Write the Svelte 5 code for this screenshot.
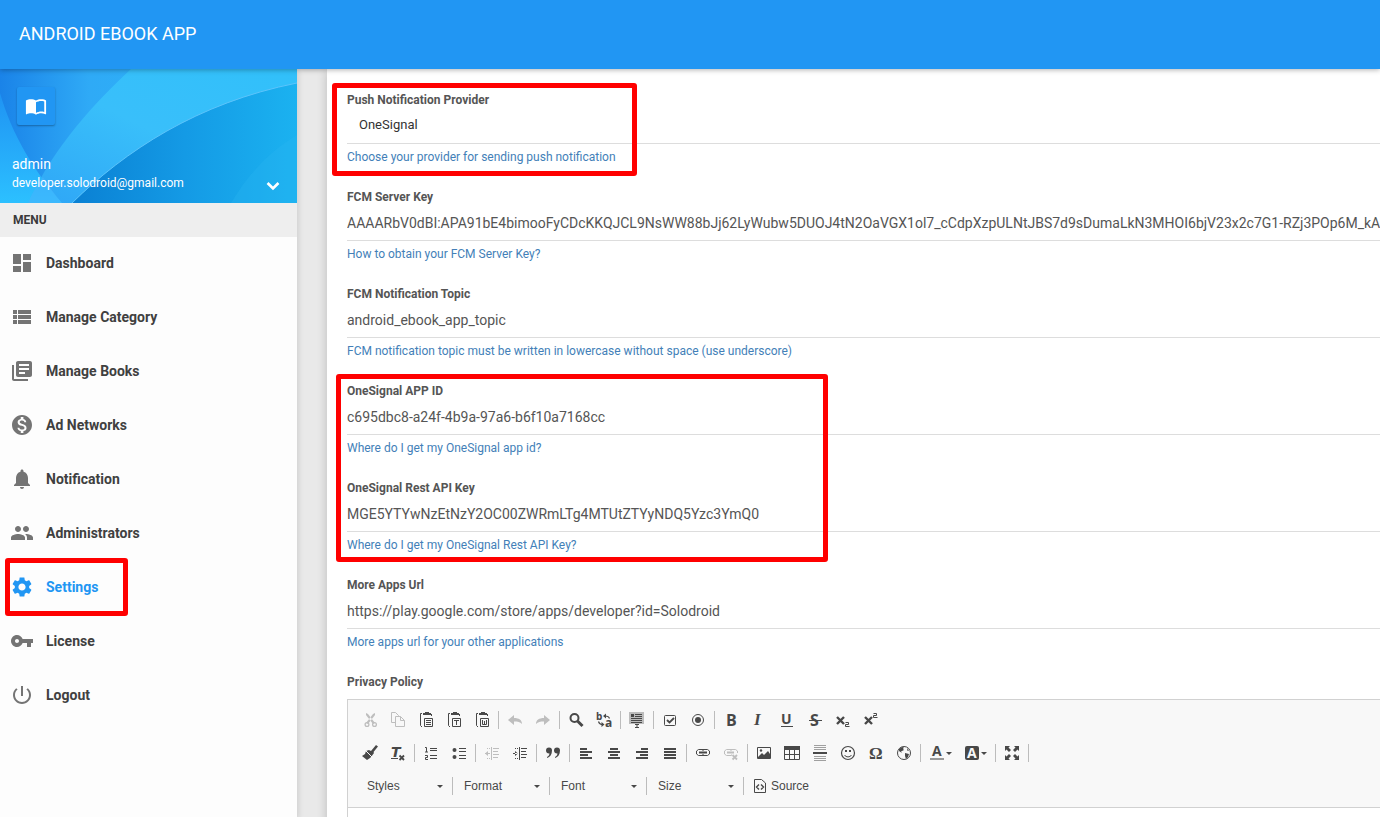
<script lang="ts">
  type Field = { id: string; label: string; value: string; help: string };

  const menu = [
    { label: 'Dashboard', icon: 'M3 13h8V3H3v10zm0 8h8v-6H3v6zm10 0h8V11h-8v10zm0-18v6h8V3h-8z' },
    { label: 'Manage Category', icon: 'M3 14h4v-4H3v4zm0 5h4v-4H3v4zM3 9h4V5H3v4zm5 5h13v-4H8v4zm0 5h13v-4H8v4zM8 5v4h13V5H8z' },
    { label: 'Manage Books', icon: 'M4 6H2v14c0 1.1.9 2 2 2h14v-2H4V6zm16-4H8c-1.1 0-2 .9-2 2v12c0 1.1.9 2 2 2h12c1.1 0 2-.9 2-2V4c0-1.1-.9-2-2-2zm-1 9H9V9h10v2zm-4 4H9v-2h6v2zm4-8H9V5h10v2z' },
    { label: 'Ad Networks', icon: 'M12 2C6.48 2 2 6.48 2 12s4.48 10 10 10 10-4.48 10-10S17.52 2 12 2zm1.41 16.09V20h-2.67v-1.93c-1.71-.36-3.16-1.46-3.27-3.4h1.96c.1 1.05.82 1.87 2.65 1.87 1.96 0 2.4-.98 2.4-1.59 0-.83-.44-1.61-2.67-2.14-2.48-.6-4.18-1.62-4.18-3.67 0-1.72 1.39-2.84 3.11-3.21V4h2.67v1.95c1.86.45 2.79 1.86 2.85 3.39H14.3c-.05-1.11-.64-1.87-2.22-1.87-1.5 0-2.4.68-2.4 1.64 0 .84.65 1.39 2.67 1.91s4.18 1.39 4.18 3.91c-.01 1.83-1.38 2.83-3.12 3.16z' },
    { label: 'Notification', icon: 'M12 22c1.1 0 2-.9 2-2h-4c0 1.1.89 2 2 2zm6-6v-5c0-3.07-1.64-5.64-4.5-6.32V4c0-.83-.67-1.5-1.5-1.5s-1.5.67-1.5 1.5v.68C7.63 5.36 6 7.92 6 11v5l-2 2v1h16v-1l-2-2z' },
    { label: 'Administrators', icon: 'M16 11c1.66 0 2.99-1.34 2.99-3S17.66 5 16 5c-1.66 0-3 1.34-3 3s1.34 3 3 3zm-8 0c1.66 0 2.99-1.34 2.99-3S9.66 5 8 5C6.34 5 5 6.34 5 8s1.34 3 3 3zm0 2c-2.33 0-7 1.17-7 3.5V19h14v-2.5c0-2.33-4.67-3.5-7-3.5zm8 0c-.29 0-.62.02-.97.05 1.16.84 1.97 1.97 1.97 3.45V19h6v-2.5c0-2.33-4.67-3.5-7-3.5z' },
    { label: 'Settings', active: true, icon: 'M19.14 12.94c.04-.3.06-.61.06-.94 0-.32-.02-.64-.07-.94l2.03-1.58c.18-.14.23-.41.12-.61l-1.92-3.32c-.12-.22-.37-.29-.59-.22l-2.39.96c-.5-.38-1.03-.7-1.62-.94l-.36-2.54c-.04-.24-.24-.41-.48-.41h-3.84c-.24 0-.43.17-.47.41l-.36 2.54c-.59.24-1.13.57-1.62.94l-2.39-.96c-.22-.08-.47 0-.59.22L2.74 8.87c-.12.21-.08.47.12.61l2.03 1.58c-.05.3-.09.63-.09.94s.02.64.07.94l-2.03 1.58c-.18.14-.23.41-.12.61l1.92 3.32c.12.22.37.29.59.22l2.39-.96c.5.38 1.03.7 1.62.94l.36 2.54c.05.24.24.41.48.41h3.84c.24 0 .44-.17.47-.41l.36-2.54c.59-.24 1.13-.56 1.62-.94l2.39.96c.22.08.47 0 .59-.22l1.92-3.32c.12-.22.07-.47-.12-.61l-2.01-1.58zM12 15.6c-1.98 0-3.6-1.62-3.6-3.6s1.62-3.6 3.6-3.6 3.6 1.62 3.6 3.6-1.62 3.6-3.6 3.6z' },
    { label: 'License', icon: 'M12.65 10C11.83 7.67 9.61 6 7 6c-3.31 0-6 2.69-6 6s2.69 6 6 6c2.61 0 4.83-1.67 5.65-4H17v4h4v-4h2v-4H12.65zM7 14c-1.1 0-2-.9-2-2s.9-2 2-2 2 .9 2 2-.9 2-2 2z' },
    { label: 'Logout', icon: 'M13 3h-2v10h2V3zm4.83 2.17l-1.42 1.42C17.99 7.86 19 9.81 19 12c0 3.87-3.13 7-7 7s-7-3.13-7-7c0-2.19 1.01-4.14 2.58-5.42L6.17 5.17C4.23 6.82 3 9.26 3 12c0 4.97 4.03 9 9 9s9-4.03 9-9c0-2.74-1.23-5.18-3.17-6.83z' }
  ];

  const fcmFields: Field[] = [
    {
      id: 'fcm_key',
      label: 'FCM Server Key',
      value: 'AAAARbV0dBI:APA91bE4bimooFyCDcKKQJCL9NsWW88bJj62LyWubw5DUOJ4tN2OaVGX1ol7_cCdpXzpULNtJBS7d9sDumaLkN3MHOI6bjV23x2c7G1-RZj3POp6M_kAX',
      help: 'How to obtain your FCM Server Key?'
    },
    {
      id: 'fcm_topic',
      label: 'FCM Notification Topic',
      value: 'android_ebook_app_topic',
      help: 'FCM notification topic must be written in lowercase without space (use underscore)'
    }
  ];

  const oneSignalFields: Field[] = [
    {
      id: 'onesignal_app_id',
      label: 'OneSignal APP ID',
      value: 'c695dbc8-a24f-4b9a-97a6-b6f10a7168cc',
      help: 'Where do I get my OneSignal app id?'
    },
    {
      id: 'onesignal_rest_key',
      label: 'OneSignal Rest API Key',
      value: 'MGE5YTYwNzEtNzY2OC00ZWRmLTg4MTUtZTYyNDQ5Yzc3YmQ0',
      help: 'Where do I get my OneSignal Rest API Key?'
    }
  ];

  const moreFields: Field[] = [
    {
      id: 'more_apps',
      label: 'More Apps Url',
      value: 'https://play.google.com/store/apps/developer?id=Solodroid',
      help: 'More apps url for your other applications'
    }
  ];

  // editor glyphs, all on a 16x16 grid
  const clipboard =
    '<path d="M4 1.5H2.5v12L4 15" fill="none" stroke="currentColor"/><path d="M5 1h2V0h4v1h2v2H5z"/><path d="M13.5 2v2" stroke="currentColor"/><path d="M6.5 6.5h8v8h-8z" fill="none" stroke="currentColor"/>';
  const sans = 'font-family="Open Sans, sans-serif" font-weight="700"';

  const glyphs: Record<string, string> = {
    Cut: '<path d="M4 1l2 1 7 9-2 1-7-9zM13 1l-2 1-7 9 2 1 7-9z"/><g fill="none" stroke="currentColor" stroke-width="1.3"><circle cx="5" cy="12.5" r="1.9"/><circle cx="12.5" cy="12.5" r="1.9"/></g>',
    Copy: '<path d="M5 10.5H1.5v-10h4l3 3V4M5.5 4.5h5l4 4v6h-9zM10.5 4.5v4h4" fill="none" stroke="currentColor"/>',
    Paste: clipboard + '<path d="M8 8h5v1H8zM8 10h5v1H8zM8 12h5v1H8z"/>',
    'Paste as plain text': clipboard + '<path d="M8 8h5v1h-2v4h-1V9H8z"/>',
    'Paste from Word': clipboard + '<path d="M8.5 8v4.5h4V8M10.5 9v3" fill="none" stroke="currentColor"/>',
    Undo: '<path d="M1 8l6-5v3c5 0 8 2 8 6-2-2-4-2.5-8-2.5V13z"/>',
    Redo: '<path d="M15 8L9 3v3C4 6 1 8 1 12c2-2 4-2.5 8-2.5V13z"/>',
    Find: '<circle cx="6.5" cy="6" r="4" fill="none" stroke="currentColor" stroke-width="2"/><path d="M9.5 9l5 5" stroke="currentColor" stroke-width="3"/>',
    Replace: `<text x="0" y="8" font-size="10" ${sans}>b</text><text x="9" y="15" font-size="12" ${sans}>a</text><path d="M13.5 6.5C13 4.5 12 4 9 4M2.5 9.500c.5 2 1.5 3 4.5 3" fill="none" stroke="currentColor" stroke-width="1.2"/><path d="M7 4l3-2.5v5zM8.5 12.5l-3-2.5v5z"/>`,
    'Select all': '<path fill="#bcbcbc" d="M0 0h15v12H0z"/><path d="M2 2h3v3H2zM6 2h7v1H6zM6 4h7v1H6zM2 6h11v1H2zM2 8h11v1H2zM2 10h11v1H2zM6 12h4v1H8.5v2H10v1H6v-1h1.5v-2H6z"/>',
    Checkbox: '<rect x="2.5" y="3.5" width="11" height="10" rx="1" fill="none" stroke="currentColor"/><path d="M5 8l2.5 2.5L12 6" fill="none" stroke="currentColor" stroke-width="1.8"/>',
    'Radio button': '<circle cx="8" cy="8" r="5.5" fill="none" stroke="currentColor"/><circle cx="8" cy="8" r="3"/>',
    Bold: `<text x="3" y="14" font-size="16" ${sans}>B</text>`,
    Italic: '<text x="3" y="13" font-size="17" font-family="Liberation Serif, serif" font-weight="700" font-style="italic">I</text>',
    Underline: `<text x="2" y="12" font-size="14" ${sans}>U</text><path d="M2 14h12v1H2z"/>`,
    Strikethrough: `<text x="3" y="14" font-size="16" ${sans}>S</text><path d="M2 8h13v1H2z"/>`,
    Subscript: '<path d="M2 5l7 7M9 5l-7 7" fill="none" stroke="currentColor" stroke-width="2.4"/><path d="M10.5 10.5h3v2h-3v2h4" fill="none" stroke="currentColor"/>',
    Superscript: '<path d="M2 5l7 7M9 5l-7 7" fill="none" stroke="currentColor" stroke-width="2.4"/><path d="M10.500 1.5h3v2h-3v2h4" fill="none" stroke="currentColor"/>',
    'Copy formatting': '<path d="M14 0l2 1.5-4.5 5.5.5 1-3 4-1 1-3 2-5-4 3-2 1-3 3-1 2 1z"/><path d="M4 6l6 6" stroke="#f8f8f8"/>',
    'Remove format': '<text x="1" y="12" font-size="14" font-family="DejaVu Sans, sans-serif" font-weight="700" font-style="italic">T</text><path d="M1 13h7v1H1z"/><path d="M9.5 10.5l4.5 4.5m0-4.5L9.5 15" stroke="currentColor" stroke-width="1.8"/>',
    'Numbered list': '<path d="M2 2.5h1.5V7M2 7h3M2 10.5h2.500v2h-2v2H5" fill="none" stroke="currentColor"/><path d="M7 3h7v1H7zM7 5h7v1H7zM7 10h7v1H7zM7 13h7v1H7z"/>',
    'Bulleted list': '<circle cx="3.5" cy="5" r="2"/><circle cx="3.5" cy="12" r="2"/><path d="M8 3h7v1H8zM8 6h7v1H8zM8 10h7v1H8zM8 13h7v1H8z"/>',
    Outdent: '<path d="M7 2h1v13H7zM9 3h6v1H9zM9 6h5v1H9zM9 9h6v1H9zM9 12h5v1H9zM1 8h5v1H1zM1 8.500l3-2.5v5z"/><path d="M3 3.5h3M3 13.5h3" stroke="currentColor" stroke-dasharray="1"/>',
    Indent: '<path d="M7 2h1v13H7zM9 3h6v1H9zM9 6h5v1H9zM9 9h6v1H9zM9 12h5v1H9zM1 8h5v1H1zM6 8.500L3 6v5z"/><path d="M3 3.5h3M3 13.5h3" stroke="currentColor" stroke-dasharray="1"/>',
    'Block quote': '<path d="M1 5.5a3 3 0 1 1 6 0C7 9.500 5 12 2 13v-1c1.7-1 2.3-2 2.5-3.500C2.5 8.7 1 7.5 1 5.5zM9 5.5a3 3 0 1 1 6 0c0 4-2 6.500-5 7.5v-1c1.7-1 2.3-2 2.5-3.5C10.5 8.7 9 7.5 9 5.5z"/>',
    'Align left': '<path d="M2 3h7v2H2zM2 6h12v2H2zM2 9h8v2H2zM2 12h12v2H2z"/>',
    Center: '<path d="M4 3h8v2H4zM2 6h12v2H2zM4 9h8v2H4zM2 12h12v2H2z"/>',
    'Align right': '<path d="M7 3h7v2H7zM2 6h12v2H2zM6 9h8v2H6zM2 12h12v2H2z"/>',
    Justify: '<path d="M2 3h12v2H2zM2 6h12v2H2zM2 9h12v2H2zM2 12h12v2H2z"/>',
    Link: '<g fill="none" stroke="currentColor"><path d="M8.500 5.500v-1h-5l-2 1.5v3l2 1.5h5v-1M7.500 5.500v-1h5l2 1.500v3l-2 1.500h-5v-1"/><path d="M4 7.500h8" stroke-width="2"/></g>',
    Unlink: '<g fill="none" stroke="currentColor"><path d="M8.500 5.500v-1h-5l-2 1.500v3l2 1.500h5v-1M7.500 5.500v-1h5l2 1.500v2"/><path d="M4 7.500h7" stroke-width="2"/><path d="M9.500 10l4.500 4.500m0-4.500l-4.500 4.500" stroke-width="1.800"/></g>',
    Image: '<path d="M1.5 2.5h13v11h-13z" fill="none" stroke="currentColor"/><path d="M2 12l4-4 2 2 4-4 2 3v4H2z"/><circle cx="5" cy="5.5" r="1.2"/>',
    Table: '<path d="M0 1h16v4H0z"/><path d="M.5 4.5v10h15v-10M.5 9.5h15M5.5 5v9M10.5 5v9" fill="none" stroke="currentColor"/>',
    'Horizontal line': '<path d="M2 0h12v1H2zM2 2h12v1H2zM2 4h12v1H2zM2 11h12v1H2zM2 13h12v1H2zM2 15h12v1H2z" opacity=".5"/><path d="M1 7h14v2H1z"/>',
    Smiley: '<circle cx="8" cy="8" r="6.5" fill="none" stroke="currentColor" stroke-width="1.2"/><path d="M5 5h2v2H5zM9 5h2v2H9z"/><path d="M4.5 10c1.5 2.5 5.5 2.5 7 0" fill="none" stroke="currentColor"/>',
    'Special character': '<text x="1" y="14" font-size="17" font-family="Liberation Serif, serif" font-weight="700">Ω</text>',
    IFrame: '<circle cx="8" cy="8" r="6.5" fill="none" stroke="currentColor"/><path d="M3 4l3-2 2 .5L7 4l1 1-2 1-1 .5 1 1.500-3-2zM9 8l4 1-1 3-2 2-1-3zM11 3l2 2.500-1.500.5z"/>',
    'Text colour': `<text x="3" y="11" font-size="14" ${sans}>A</text><path d="M1 13h14v2H1z" fill="#999"/>`,
    'Background colour': `<rect x="1" y="1" width="14" height="14" rx="2"/><text x="3" y="13" font-size="14" fill="#f8f8f8" ${sans}>A</text>`,
    Maximize: '<path d="M1 1h5L4.5 2.5 7 5 5 7 2.5 4.5 1 6zM15 1v5l-1.5-1.5L11 7 9 5l2.5-2.5L10 1zM1 15v-5l1.5 1.5L5 9l2 2-2.5 2.5L6 15zM15 15h-5l1.5-1.5L9 11l2-2 2.5 2.5L15 10z"/>',
    Source: '<path d="M2.5 1.5h7l4 3.5v9.5h-11z" fill="none" stroke="currentColor"/><path d="M7 6.5L4.5 9 7 11.5M9 6.5L11.5 9 9 11.5" fill="none" stroke="currentColor" stroke-width="1.4"/>'
  };

  const disabled = ['Cut', 'Copy', 'Undo', 'Redo', 'Outdent', 'Unlink'];
  const withCaret = ['Text colour', 'Background colour'];

  const toolRows = [
    [
      ['Cut', 'Copy', 'Paste', 'Paste as plain text', 'Paste from Word'],
      ['Undo', 'Redo'],
      ['Find', 'Replace'],
      ['Select all'],
      ['Checkbox', 'Radio button'],
      ['Bold', 'Italic', 'Underline', 'Strikethrough', 'Subscript', 'Superscript']
    ],
    [
      ['Copy formatting', 'Remove format'],
      ['Numbered list', 'Bulleted list'],
      ['Outdent', 'Indent'],
      ['Block quote'],
      ['Align left', 'Center', 'Align right', 'Justify'],
      ['Link', 'Unlink'],
      ['Image', 'Table', 'Horizontal line', 'Smiley', 'Special character', 'IFrame'],
      ['Text colour', 'Background colour'],
      ['Maximize'],
      []
    ]
  ];

  const combos = ['Styles', 'Format', 'Font', 'Size'];
</script>

{#snippet textField(field: Field)}
  <div class="field">
    <label for={field.id}>{field.label}</label>
    <input id={field.id} type="text" value={field.value} />
    <a class="help" href="#{field.id}">{field.help}</a>
  </div>
{/snippet}

<div class="app">
  <header class="navbar">
    <a class="brand" href="#home">ANDROID EBOOK APP</a>
  </header>

  <div class="body">
    <aside class="sidebar">
      <div class="user">
        <svg class="user-bg" viewBox="0 0 297 134" preserveAspectRatio="none" aria-hidden="true">
          <defs>
            <linearGradient id="sky" x1="0" y1="0" x2="1" y2="0">
              <stop offset="0" stop-color="#1a83e8" />
              <stop offset="0.3" stop-color="#2faaf6" />
              <stop offset="1" stop-color="#2ab9fa" />
            </linearGradient>
            <linearGradient id="mid" x1="0" y1="1" x2="1" y2="0">
              <stop offset="0" stop-color="#2ea5f6" />
              <stop offset="0.5" stop-color="#39bffa" />
              <stop offset="1" stop-color="#31c0fa" />
            </linearGradient>
            <linearGradient id="deep" x1="0" y1="0" x2="1" y2="0">
              <stop offset="0" stop-color="#0a80d3" />
              <stop offset="0.5" stop-color="#149ae5" />
              <stop offset="1" stop-color="#1bb2f0" />
            </linearGradient>
            <linearGradient id="edge" x1="0" y1="0" x2="0" y2="1">
              <stop offset="0" stop-color="#1f93f3" />
              <stop offset="1" stop-color="#2cc0ff" />
            </linearGradient>
          </defs>
          <path fill="url(#sky)" d="M0 0h297v134H0z" />
          <path fill="url(#mid)" d="M131 0C96 33 55 75 28 134h269V0z" />
          <path fill="url(#edge)" d="M0 24c12 42 34 78 62 110H0z" />
          <path fill="#4cb2fb" opacity="0.5" d="M43 108c6 9 12 18 19 26H28c4-10 9-18 15-26z" />
          <path fill="url(#deep)" d="M72 134C125 82 197 34 297 14v120z" />
          <path fill="#2bb6f2" opacity="0.3" d="M297 66c-27 16-48 38-66 68h66z" />
          <path fill="none" stroke="#5cc4fb" d="M72 134C125 82 197 34 297 14" />
        </svg>
        <div class="logo">
          <svg viewBox="0 0 24 24" width="22" height="22" aria-hidden="true">
            <path d="M21 5c-1.11-.35-2.33-.5-3.5-.5-1.95 0-4.05.4-5.5 1.5-1.45-1.1-3.55-1.5-5.5-1.5S2.45 4.9 1 6v14.65c0 .25.25.5.5.5.1 0 .15-.05.25-.05C3.1 20.45 5.05 20 6.5 20c1.95 0 4.05.4 5.5 1.5 1.35-.85 3.8-1.5 5.5-1.5 1.65 0 3.35.3 4.75 1.05.1.05.15.05.25.05.25 0 .5-.25.5-.5V6c-.6-.45-1.25-.75-2-1zm0 13.5c-1.1-.35-2.3-.5-3.5-.5-1.7 0-4.15.65-5.5 1.5V8c1.35-.85 3.8-1.5 5.5-1.5 1.2 0 2.4.15 3.5.5v11.5z" />
          </svg>
        </div>
        <div class="user-row">
          <div class="user-text">
            <div class="user-name">admin</div>
            <div class="user-mail">developer.solodroid@gmail.com</div>
          </div>
          <button class="more" type="button" aria-label="Account menu">
            <svg viewBox="0 0 24 24" width="24" height="24" aria-hidden="true">
              <path d="M7.5 8L12 12.500 16.500 8l1.900 1.900L12 16.300 5.600 9.900z" />
            </svg>
          </button>
        </div>
      </div>

      <div class="menu-title">MENU</div>
      <nav class="menu">
        {#each menu as item}
          <a href="#{item.label}" class:active={item.active}>
            <svg viewBox="0 0 24 24" width="24" height="24" aria-hidden="true"><path d={item.icon} /></svg>
            <span>{item.label}</span>
            {#if item.active}
              <i class="mark mark-menu"></i>
            {/if}
          </a>
        {/each}
      </nav>
    </aside>

    <main class="content">
      <form class="card">
        <div class="group">
          <div class="field">
            <label for="provider">Push Notification Provider</label>
            <select id="provider">
              <option>OneSignal</option>
            </select>
            <a class="help" href="#provider">Choose your provider for sending push notification</a>
          </div>
          <i class="mark mark-provider"></i>
        </div>

        {#each fcmFields as field}
          {@render textField(field)}
        {/each}

        <div class="group">
          {#each oneSignalFields as field}
            {@render textField(field)}
          {/each}
          <i class="mark mark-onesignal"></i>
        </div>

        {#each moreFields as field}
          {@render textField(field)}
        {/each}

        <label for="privacy">Privacy Policy</label>
        <div class="editor">
          <div class="toolbar">
            {#each toolRows as row}
              <div class="tools">
                {#each row as group, i}
                  {#if i > 0}<span class="sep"></span>{/if}
                  {#each group as name}
                    <button type="button" aria-label={name} disabled={disabled.includes(name)}>
                      <svg viewBox="0 0 16 16" width="16" height="16" aria-hidden="true">{@html glyphs[name]}</svg>
                      {#if withCaret.includes(name)}<span class="caret"></span>{/if}
                    </button>
                  {/each}
                {/each}
              </div>
            {/each}
            <div class="tools">
              {#each combos as combo}
                <div class="combo">
                  <select aria-label={combo}><option>{combo}</option></select>
                  <span class="caret"></span>
                </div>
              {/each}
              <button class="source" type="button">
                <svg viewBox="0 0 16 16" width="16" height="16" aria-hidden="true">{@html glyphs.Source}</svg>
                Source
              </button>
            </div>
          </div>
          <textarea id="privacy"></textarea>
        </div>
      </form>
    </main>
  </div>
</div>

<style>
  :global(body) {
    margin: 0;
    font-family: Roboto, sans-serif;
    background: #e9e9e9;
  }

  .app {
    display: flex;
    flex-direction: column;
    height: 100vh;
    overflow: hidden;
  }

  .navbar {
    position: relative;
    z-index: 2;
    flex: none;
    display: flex;
    align-items: center;
    height: 69px;
    padding: 0 19px 2px;
    box-sizing: border-box;
    background: #2196f3;
    box-shadow: 0 1px 5px rgba(0, 0, 0, 0.3);
  }

  .brand {
    color: #fff;
    font-size: 18px;
    text-decoration: none;
  }

  .body {
    flex: 1;
    display: flex;
    min-height: 0;
  }

  .sidebar {
    flex: none;
    width: 297px;
    background: #fdfdfd;
    box-shadow: 2px 2px 5px rgba(0, 0, 0, 0.1);
  }

  .user {
    position: relative;
    display: flex;
    flex-direction: column;
    justify-content: space-between;
    height: 134px;
    padding: 18px 12px 5px;
    box-sizing: border-box;
    color: #fff;
  }

  .user-bg {
    position: absolute;
    inset: 0;
    width: 100%;
    height: 100%;
  }

  .logo {
    position: relative;
    display: flex;
    align-items: center;
    justify-content: center;
    width: 38px;
    height: 38px;
    margin-left: 5px;
    border-radius: 2px;
    background: #2196f3;
    box-shadow: 0 1px 2px rgba(0, 0, 0, 0.3);
  }

  .user svg {
    fill: #fff;
  }

  .user-row {
    position: relative;
    display: flex;
    align-items: flex-end;
    justify-content: space-between;
  }

  .user-text {
    padding-bottom: 6px;
  }

  .user-name {
    font-size: 14px;
    line-height: 20px;
  }

  .user-mail {
    font-size: 12px;
    line-height: 18px;
  }

  .more {
    display: flex;
    padding: 0;
    border: 0;
    background: none;
  }

  .menu-title {
    padding: 0 13px;
    background: #eee;
    color: #3a3a3a;
    font-size: 12px;
    font-weight: 700;
    line-height: 34px;
  }

  .menu {
    display: flex;
    flex-direction: column;
    gap: 2px;
  }

  .menu a {
    position: relative;
    display: flex;
    align-items: center;
    gap: 12px;
    height: 52px;
    padding: 0 10px;
    color: #404040;
    font-size: 14px;
    font-weight: 700;
    text-decoration: none;
  }

  .menu svg {
    fill: #747474;
  }

  .menu .active {
    color: #2196f3;
  }

  .menu .active svg {
    fill: #2196f3;
  }

  .mark {
    position: absolute;
    box-sizing: border-box;
    border: 5px solid #f00;
    border-radius: 3px;
    pointer-events: none;
  }

  .mark-menu {
    top: -3px;
    left: 5px;
    width: 123px;
    height: 58px;
  }

  .mark-provider {
    top: -8px;
    left: -15px;
    width: 305px;
    height: 93px;
  }

  .mark-onesignal {
    top: -8px;
    left: -11px;
    width: 492px;
    height: 188px;
  }

  .content {
    flex: 1;
    min-width: 0;
    padding-left: 30px;
  }

  .card {
    min-height: 100%;
    padding: 22px 0 0 20px;
    box-sizing: border-box;
    background: #fff;
    box-shadow: 0 2px 10px rgba(0, 0, 0, 0.2);
  }

  .group {
    position: relative;
  }

  .field {
    display: flex;
    flex-direction: column;
    align-items: flex-start;
    margin-bottom: 22px;
  }

  label {
    display: block;
    color: #555;
    font-size: 12px;
    font-weight: 700;
    line-height: 18px;
  }

  .field input,
  .field select {
    width: 100%;
    height: 35px;
    padding: 0;
    border: 0;
    border-bottom: 1px solid #ddd;
    border-radius: 0;
    box-sizing: border-box;
    background: none;
    color: #555;
    font: 14px Roboto, sans-serif;
    outline: 0;
  }

  .field select {
    appearance: none;
    padding: 0 12px 3px;
    color: #333;
    font-size: 13px;
  }

  .help {
    margin-top: 4px;
    color: #437fb8;
    font-size: 12px;
    line-height: 18px;
    text-decoration: none;
  }

  .editor {
    margin-top: 8px;
    border: 1px solid #d1d1d1;
    border-right: 0;
  }

  .toolbar {
    display: flex;
    flex-direction: column;
    gap: 5px;
    padding: 6px 8px 7px;
    border-bottom: 1px solid #d1d1d1;
    background: #f8f8f8;
  }

  .tools {
    display: flex;
    align-items: center;
    height: 28px;
  }

  .tools button {
    display: flex;
    align-items: center;
    height: 28px;
    padding: 0 6px;
    border: 0;
    background: none;
    color: #484848;
    font: 12px 'Liberation Sans', Arial, sans-serif;
  }

  .tools button:disabled {
    color: #bebebe;
  }

  .tools svg {
    fill: currentColor;
    overflow: visible;
  }

  .sep {
    width: 1px;
    height: 18px;
    margin: 0 2px;
    background: #bcbcbc;
  }

  .caret {
    width: 0;
    border: 3px solid transparent;
    border-top-color: #484848;
    border-bottom: 0;
  }

  .tools button .caret {
    margin-left: 1px;
  }

  .combo {
    display: flex;
    align-items: center;
    width: 97px;
    height: 18px;
    padding: 0 9px 0 11px;
    box-sizing: border-box;
    border-right: 1px solid #bcbcbc;
  }

  .combo select {
    flex: 1;
    min-width: 0;
    padding: 0;
    border: 0;
    appearance: none;
    background: none;
    color: #484848;
    font: 12px 'Liberation Sans', Arial, sans-serif;
  }

  .tools .source {
    gap: 3px;
    padding-left: 8px;
  }

  textarea {
    display: block;
    width: 100%;
    height: 200px;
    border: 0;
    box-sizing: border-box;
    resize: none;
  }
</style>
